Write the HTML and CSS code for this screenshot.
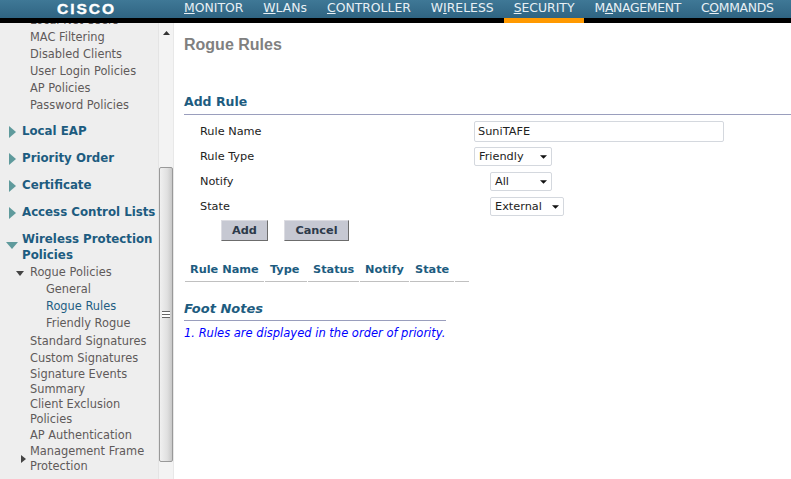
FILE: index.html
```html
<!DOCTYPE html>
<html lang="en">
<head>
<meta charset="utf-8">
<title>Rogue Rules</title>
<link rel="stylesheet" href="styles.css">
</head>
<body>
<header class="topbar">
  <div class="brand">CISCO</div>
  <nav class="nav">
    <a class="nav-item"><u>M</u>ONITOR</a>
    <a class="nav-item"><u>W</u>LANs</a>
    <a class="nav-item"><u>C</u>ONTROLLER</a>
    <a class="nav-item">W<u>I</u>RELESS</a>
    <a class="nav-item active"><u>S</u>ECURITY</a>
    <a class="nav-item tight">M<u>A</u>NAGEMENT</a>
    <a class="nav-item tight">C<u>O</u>MMANDS</a>
  </nav>
</header>
<div class="main">
  <aside class="sidebar">
    <div class="tree">
      <div class="clipped">
        <a class="leaf">Local Net Users</a>
        <a class="leaf">MAC Filtering</a>
        <a class="leaf">Disabled Clients</a>
        <a class="leaf">User Login Policies</a>
        <a class="leaf">AP Policies</a>
        <a class="leaf">Password Policies</a>
      </div>
      <a class="group"><svg class="tri" width="7" height="12" viewBox="0 0 7 12"><path d="M0 0L7 6L0 12Z"/></svg>Local EAP</a>
      <a class="group"><svg class="tri" width="7" height="12" viewBox="0 0 7 12"><path d="M0 0L7 6L0 12Z"/></svg>Priority Order</a>
      <a class="group"><svg class="tri" width="7" height="12" viewBox="0 0 7 12"><path d="M0 0L7 6L0 12Z"/></svg>Certificate</a>
      <a class="group"><svg class="tri" width="7" height="12" viewBox="0 0 7 12"><path d="M0 0L7 6L0 12Z"/></svg>Access Control Lists</a>
      <a class="group open"><svg class="tri-down" width="12" height="7" viewBox="0 0 12 7"><path d="M0 0H12L6 7Z"/></svg>Wireless Protection Policies</a>
      <a class="leaf expanded"><svg class="mini-down" width="8" height="5" viewBox="0 0 8 5"><path d="M0 0H8L4 5Z"/></svg>Rogue Policies</a>
      <a class="leaf child">General</a>
      <a class="leaf child current">Rogue Rules</a>
      <a class="leaf child">Friendly Rogue</a>
      <a class="leaf tall">Standard Signatures</a>
      <a class="leaf">Custom Signatures</a>
      <a class="leaf multi">Signature Events Summary</a>
      <a class="leaf multi">Client Exclusion Policies</a>
      <a class="leaf">AP Authentication</a>
      <a class="leaf multi expandable"><svg class="mini-right" width="5" height="8" viewBox="0 0 5 8"><path d="M0 0L5 4L0 8Z"/></svg>Management Frame Protection</a>
    </div>
    <div class="scrollbar">
      <svg class="arrow-up" width="7" height="4" viewBox="0 0 7 4"><path d="M3.5 0L7 4H0Z"/></svg>
      <div class="thumb"><span class="grip"></span></div>
    </div>
  </aside>
  <main class="content">
    <h1 class="page-title">Rogue Rules</h1>
    <h2 class="section-title">Add Rule</h2>
    <div class="form">
      <div class="form-row">
        <label class="form-label">Rule Name</label>
        <input class="text-input" type="text" value="SuniTAFE">
      </div>
      <div class="form-row">
        <label class="form-label">Rule Type</label>
        <div class="select type-select">Friendly<svg class="caret" width="7" height="4" viewBox="0 0 8 4"><path d="M0 0H8L4 4Z"/></svg></div>
      </div>
      <div class="form-row">
        <label class="form-label">Notify</label>
        <div class="select indented notify-select">All<svg class="caret" width="7" height="4" viewBox="0 0 8 4"><path d="M0 0H8L4 4Z"/></svg></div>
      </div>
      <div class="form-row">
        <label class="form-label">State</label>
        <div class="select indented state-select">External<svg class="caret" width="7" height="4" viewBox="0 0 8 4"><path d="M0 0H8L4 4Z"/></svg></div>
      </div>
      <div class="buttons">
        <button class="btn add-btn" type="button">Add</button>
        <button class="btn cancel-btn" type="button">Cancel</button>
      </div>
    </div>
    <div class="rule-table">
      <div class="col c1">Rule Name</div>
      <div class="col c2">Type</div>
      <div class="col c3">Status</div>
      <div class="col c4">Notify</div>
      <div class="col c5">State</div>
      <div class="col c6"></div>
    </div>
    <h3 class="foot-title">Foot Notes</h3>
    <p class="foot-note">1. Rules are displayed in the order of priority.</p>
  </main>
</div>
</body>
</html>
```
FILE: styles.css
```css
* { box-sizing: border-box; }
html, body { margin: 0; padding: 0; }
body {
  width: 791px;
  height: 479px;
  overflow: hidden;
  background: #fff;
  font-family: "DejaVu Sans", Verdana, sans-serif;
  font-size: 11.3px;
  color: #222;
}
.topbar {
  height: 23px;
  display: flex;
  background: linear-gradient(#3f7896, #2f6482);
  border-bottom: 5px solid #000;
}
.brand {
  width: 174px;
  padding-left: 57px;
  color: #fff;
  font-family: "Liberation Sans", sans-serif;
  font-weight: 700;
  font-size: 15.5px;
  letter-spacing: 2px;
  line-height: 17px;
  -webkit-text-stroke: 0.4px #fff;
}
.nav { display: flex; height: 23px; }
.nav-item {
  display: block;
  height: 23px;
  padding: 0 10px;
  color: #e8f0f5;
  font-size: 12.4px;
  line-height: 15px;
  white-space: nowrap;
}
.nav-item.active { border-bottom: 5px solid #f90; }
.nav-item.tight { letter-spacing: -0.3px; }
.main { display: flex; height: 456px; }
.sidebar {
  width: 174px;
  display: flex;
  flex: none;
  overflow: hidden;
}
.tree {
  width: 158px;
  height: 456px;
  background: #eee;
  overflow: hidden;
  color: #5a5a5a;
}
.clipped { margin-top: -11px; }
.leaf {
  display: block;
  position: relative;
  padding-left: 30px;
  font-size: 11.4px;
  line-height: 17px;
  color: #5f5a5a;
}
.multi { line-height: 15px; padding-right: 8px; }
.child { padding-left: 46px; }
.current { color: #1f5d82; }
.tall { padding-top: 1px; }
.group {
  display: block;
  position: relative;
  margin-top: 10px;
  padding-left: 22px;
  color: #1d5c80;
  font-size: 11.8px;
  font-weight: 700;
  line-height: 17px;
}
.clipped + .group { margin-top: 9px; }
.group.open { line-height: 16px; margin-top: 10px; margin-bottom: 1px; }
.tri { position: absolute; left: 9px; top: 3px; fill: #5f9a9c; }
.tri-down { position: absolute; left: 6px; top: 11px; fill: #5f9a9c; }
.mini-down { position: absolute; left: 16px; top: 7px; fill: #444; }
.mini-right { position: absolute; left: 21px; top: 11px; fill: #444; }
.scrollbar {
  width: 16px;
  height: 456px;
  background: #f3f3f3;
  border-left: 1px solid #e4e4e4;
  border-right: 1px solid #e8e8e8;
  padding-top: 8px;
  display: flex;
  flex-direction: column;
  align-items: center;
}
.arrow-up { fill: #333; flex: none; }
.thumb {
  margin-top: 132px;
  width: 14px;
  height: 295px;
  background: linear-gradient(90deg, #f0f0f0, #e0e0e0 60%, #c8c8c8);
  border: 1px solid #999;
  border-radius: 2px;
  display: flex;
  align-items: center;
  justify-content: center;
}
.grip {
  width: 8px;
  height: 7px;
  border-top: 1px solid #666;
  border-bottom: 1px solid #666;
  background: linear-gradient(#fff 2px, #666 2px, #666 3px, #fff 3px);
}
.content { flex: 1; min-width: 0; padding-left: 10px; }
.page-title {
  margin: 12px 0 0;
  color: #808080;
  font-family: "Liberation Sans", sans-serif;
  font-size: 16px;
  font-weight: 700;
  line-height: 20px;
}
.section-title {
  margin: 39px 0 0;
  height: 21px;
  border-bottom: 1px solid #9a9ebd;
  color: #1d5c80;
  font-size: 12.5px;
  font-weight: 700;
  line-height: 16px;
}
.form { padding: 4px 0 0 16px; }
.form-row { display: flex; height: 25px; align-items: center; }
.form-label { width: 274px; flex: none; }
.text-input {
  width: 250px;
  height: 21px;
  border: 1px solid #d4d8de;
  border-radius: 2px;
  padding: 0 3px;
  font: 11.3px "DejaVu Sans", sans-serif;
  color: #222;
  background: #fff;
}
.select {
  height: 19px;
  border: 1px solid #d4d8de;
  border-radius: 2px;
  padding-left: 4px;
  display: flex;
  align-items: center;
  justify-content: space-between;
  padding-right: 4px;
  background: #fff;
}
.type-select { width: 78px; }
.indented { margin-left: 16px; }
.notify-select { width: 62px; }
.state-select { width: 74px; }
.caret { fill: #111; }
.buttons { display: flex; gap: 16px; padding-left: 21px; margin-top: 1px; }
.btn {
  height: 21px;
  padding: 0;
  border: 1px solid;
  border-color: #dcdce2 #6c6c6c #6c6c6c #dcdce2;
  background: #c6c8d2;
  color: #2d3a4a;
  font: 700 11.3px "DejaVu Sans", sans-serif;
}
.add-btn { width: 47px; }
.cancel-btn { width: 65px; }
.rule-table { display: flex; gap: 1px; margin-top: 17px; margin-left: 1px; }
.col {
  height: 24px;
  border-bottom: 1px solid #c0c0c0;
  color: #1d5c80;
  font-weight: 700;
  font-size: 11.3px;
  line-height: 24px;
  padding-left: 5px;
  flex: none;
}
.c1 { width: 79px; }
.c2 { width: 42px; }
.c3 { width: 51px; }
.c4 { width: 49px; }
.c5 { width: 44px; }
.c6 { width: 14px; }
.foot-title {
  margin: 19px 0 0;
  width: 262px;
  height: 20px;
  border-bottom: 1px solid #9a9ebd;
  color: #1d5c80;
  font-size: 13px;
  font-weight: 700;
  font-style: italic;
  line-height: 16px;
}
.foot-note {
  margin: 4px 0 0;
  color: #00f;
  font-style: italic;
  font-size: 11.5px;
  line-height: 16px;
}
```
